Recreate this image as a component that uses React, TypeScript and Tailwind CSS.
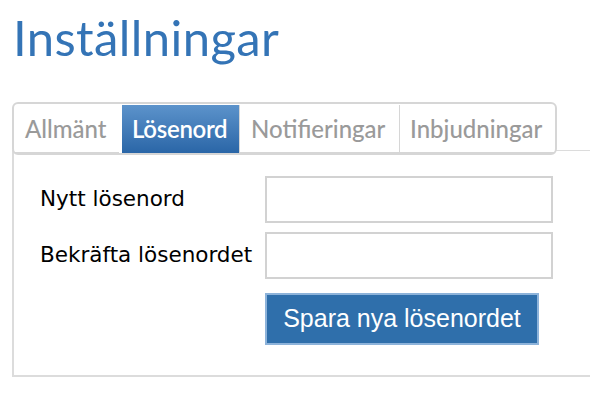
import React from "react";

const tabs = [
  { label: "Allmänt", w: "w-[104px]" },
  { label: "Lösenord", w: "w-[117px]" },
  { label: "Notifieringar", w: "w-[160px]" },
  { label: "Inbjudningar", w: "flex-1" },
];

const App: React.FC = () => {
  const active = "Lösenord";

  return (
    <div className="w-[590px] h-[404px] bg-white overflow-hidden pt-[11px]">
      <h1 className="ml-[13px] text-[49px] leading-[52px] text-[#3474b6] font-['Lato',sans-serif] tracking-[0.4px]">
        Inställningar
      </h1>

      <div className="mt-[39px]">
        {/* tab nav */}
        <div className="relative z-10 ml-[12px] w-[545px] h-[53px] -mb-[5px] bg-white border-2 border-[#d6d6d6] rounded-[6px] px-px pt-px flex">
          {tabs.map((t, i) => {
            const isActive = t.label === active;
            const prevActive = i > 0 && tabs[i - 1].label === active;
            return (
              <div
                key={t.label}
                className={`${t.w} h-[48px] flex items-center px-[10px] text-[24px] font-medium font-['Lato',sans-serif] ${
                  isActive
                    ? "bg-gradient-to-b from-[#5c93cb] to-[#2a66a7] text-white font-semibold ml-[3px] tracking-[-0.3px]"
                    : "text-[#9a9a9a] border-b border-[#d6d6d6]"
                } ${i > 0 && !isActive ? "border-l border-l-[#d6d6d6]" : ""} ${prevActive ? "pl-[11px]" : ""}`}
              >
                {t.label}
              </div>
            );
          })}
        </div>

        {/* panel */}
        <div className="ml-[12px] w-[600px] border-l-2 border-b-2 border-t border-[#dcdcdc] pl-[26px] pt-[25px] pb-[30px]">
          <div className="grid grid-cols-[225px_288px] gap-y-[9px] items-center font-['DejaVu_Sans',sans-serif] text-[21.5px] text-black">
            <label>Nytt lösenord</label>
            <input type="password" className="h-[47px] border-2 border-[#d2d2d2] bg-white outline-none" />
            <label>Bekräfta lösenordet</label>
            <input type="password" className="h-[47px] border-2 border-[#d2d2d2] bg-white outline-none" />
            <div />
            <div className="pt-[5px]">
              <button className="h-[52px] w-[274px] border-2 border-[#8db3da] bg-[#2f6fab] text-white text-[25px] font-['Liberation_Sans',sans-serif]">
                Spara nya lösenordet
              </button>
            </div>
          </div>
        </div>
      </div>
    </div>
  );
};

export default App;
